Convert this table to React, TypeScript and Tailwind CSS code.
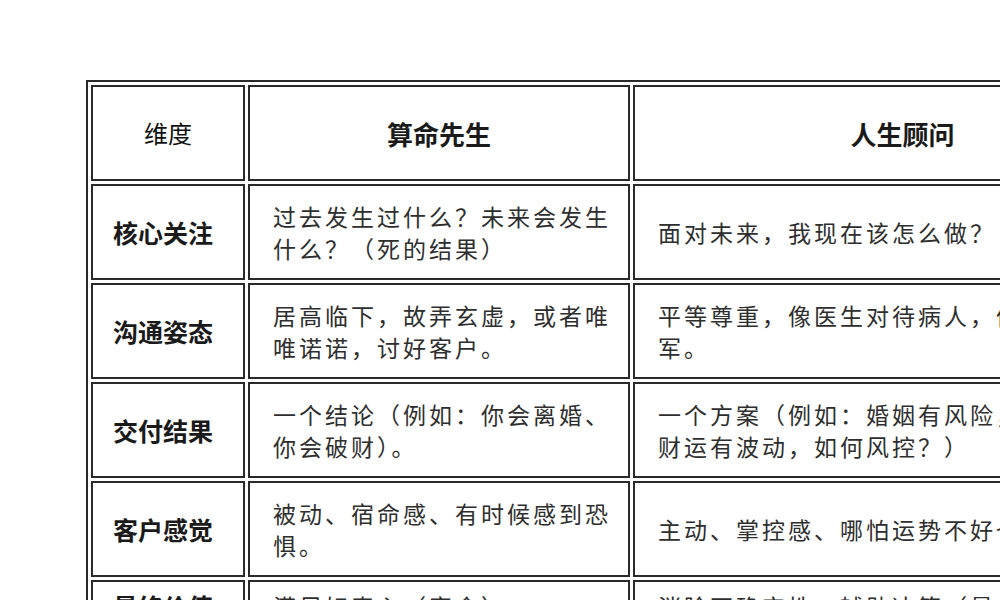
import React from "react";

const rows: [string, string[], string[]][] = [
  ["核心关注", ["过去发生过什么？未来会发生", "什么？（死的结果）"], ["面对未来，我现在该怎么做？"]],
  ["沟通姿态", ["居高临下，故弄玄虚，或者唯", "唯诺诺，讨好客户。"], ["平等尊重，像医生对待病人，像参谋对待将", "军。"]],
  ["交付结果", ["一个结论（例如：你会离婚、", "你会破财）。"], ["一个方案（例如：婚姻有风险，如何经营？", "财运有波动，如何风控？）"]],
  ["客户感觉", ["被动、宿命感、有时候感到恐", "惧。"], ["主动、掌控感、哪怕运势不好也有底气。"]],
  ["最终价值", ["满足好奇心（宿命）"], ["消除不确定性，辅助决策（最优解）"]],
];

const font = { fontFamily: '"Noto Sans CJK SC", "Noto Sans", sans-serif' };

function Lines({ lines }: { lines: string[] }) {
  return (
    <>
      {lines.map((l, i) => (
        <div key={i} className="whitespace-nowrap">
          {l}
        </div>
      ))}
    </>
  );
}

export default function App() {
  return (
    <div className="w-[1000px] h-[600px] overflow-hidden bg-white pt-[80px] pl-[86px]" style={font}>
      <table className="table-fixed w-[1091px] border-separate border-spacing-[3px] border-2 border-[#2a2a2a]">
        <tbody>
          <tr>
            <th className="w-[154px] h-[96px] border-2 border-[#2a2a2a] text-center align-middle text-[24px] font-normal text-[#111]">
              维度
            </th>
            <th className="w-[382px] h-[96px] border-2 border-[#2a2a2a] text-center align-middle text-[26px] font-bold text-[#1a1a1a]">
              算命先生
            </th>
            <th className="w-[539px] h-[96px] border-2 border-[#2a2a2a] text-center align-middle text-[26px] font-bold text-[#1a1a1a]">
              人生顾问
            </th>
          </tr>
          {rows.map(([h, a, b], i) => {
            const hcls = i < 4 ? "h-[95px] py-[14px]" : "py-[8px]";
            return (
              <tr key={i}>
                <td
                  className={`${hcls} border-2 border-[#2a2a2a] pl-[20px] pr-[4px] align-middle text-[25px] leading-[32px] font-semibold text-[#1a1a1a] whitespace-nowrap`}
                >
                  {h}
                </td>
                <td
                  className={`${hcls} border-2 border-[#2a2a2a] pl-[23px] pr-[10px] align-middle text-[23px] leading-[32px] tracking-[3px] text-[#2e2e2e]`}
                >
                  <Lines lines={a} />
                </td>
                <td
                  className={`${hcls} border-2 border-[#2a2a2a] pl-[23px] pr-[10px] align-middle text-[23px] leading-[32px] tracking-[3px] text-[#2e2e2e]`}
                >
                  <Lines lines={b} />
                </td>
              </tr>
            );
          })}
        </tbody>
      </table>
    </div>
  );
}
